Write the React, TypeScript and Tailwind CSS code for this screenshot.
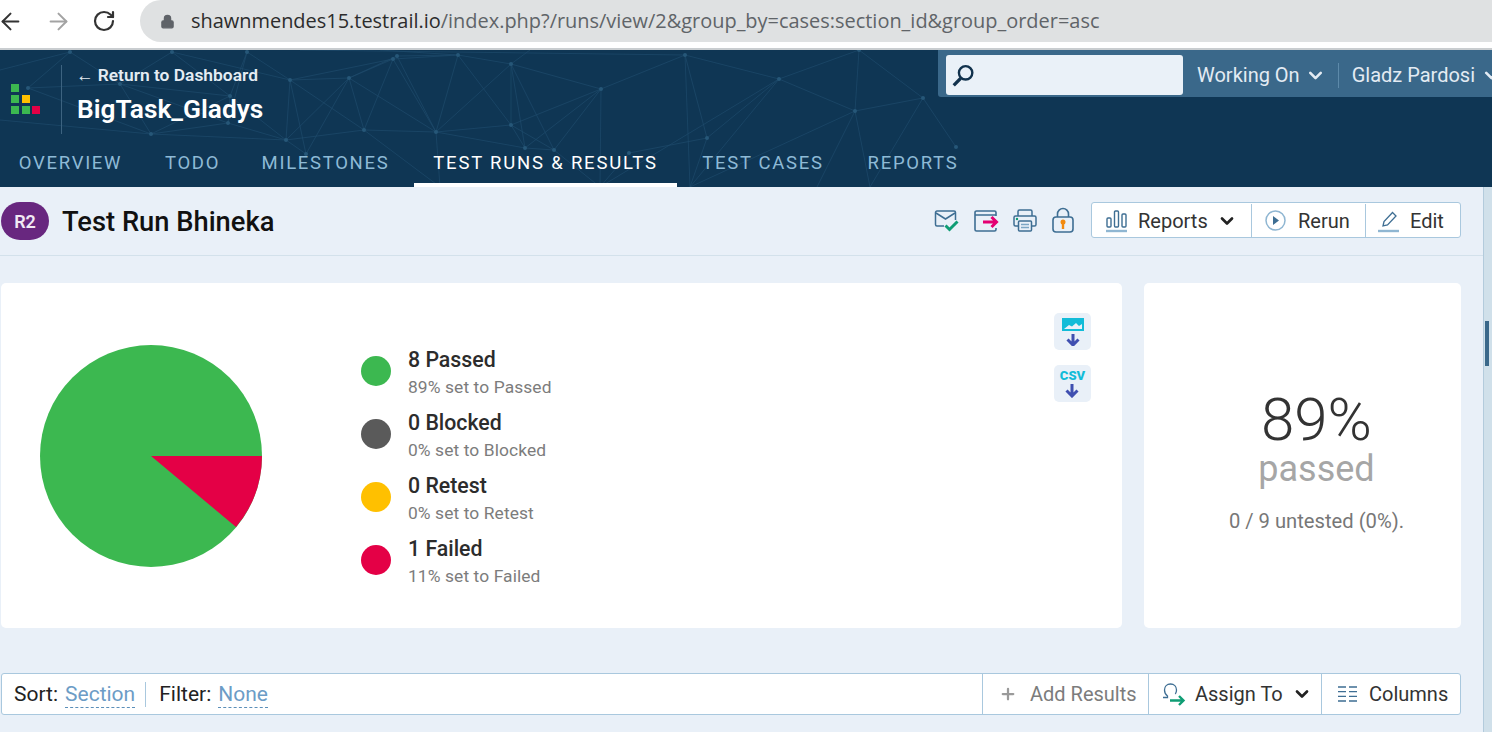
import { ArrowLeft, ArrowRight, ChevronDown, Lock, Plus, RotateCw } from "lucide-react";

const NAV = [
  { label: "Overview", width: "w-[141px]", active: false },
  { label: "Todo", width: "w-[89px]", active: false },
  { label: "Milestones", width: "w-[163px]", active: false },
  { label: "Test Runs & Results", width: "w-[263px]", active: true },
  { label: "Test Cases", width: "w-[158px]", active: false },
  { label: "Reports", width: "w-[128px]", active: false },
];

const STATS = [
  { title: "8 Passed", detail: "89% set to Passed", color: "bg-[#3cb850]" },
  { title: "0 Blocked", detail: "0% set to Blocked", color: "bg-[#5a5a5a]" },
  { title: "0 Retest", detail: "0% set to Retest", color: "bg-[#ffc000]" },
  { title: "1 Failed", detail: "11% set to Failed", color: "bg-[#e40046]" },
];

const NODES: [number, number][] = [
  [70, 52], [172, 52], [247, 52], [28, 88], [120, 84], [230, 96], [228, 123], [151, 134],
  [286, 140], [306, 154], [290, 80], [349, 78], [393, 59], [397, 56], [458, 55], [511, 64],
  [601, 89], [364, 130], [436, 132], [511, 125], [525, 148], [554, 150], [685, 55], [779, 79],
  [855, 111], [923, 98], [707, 138], [629, 153], [956, 147], [859, 50],
];

// points outside the visible band, the lines run off to these
const EDGES: [number, number][] = [
  [0, 70], [300, 50], [440, 187], [600, 187], [690, 187], [817, 187], [870, 187], [380, 50], [530, 50], [0, 120],
];

const POINTS = [...NODES, ...EDGES];

const LINKS: [number, number][] = [
  [0, 3], [0, 4], [0, 30], [1, 4], [1, 5], [1, 10], [2, 5], [2, 6], [2, 10], [3, 4], [3, 7], [4, 7],
  [4, 5], [4, 6], [5, 6], [5, 8], [5, 7], [6, 7], [6, 8], [7, 8], [7, 39], [8, 9], [10, 11], [10, 12],
  [10, 8], [10, 9], [10, 17], [11, 12], [11, 13], [11, 8], [11, 9], [11, 17], [11, 18], [12, 17],
  [12, 18], [13, 18], [13, 14], [12, 14], [14, 18], [14, 15], [14, 19], [15, 18], [15, 19], [15, 20],
  [15, 21], [16, 15], [16, 19], [16, 20], [16, 21], [8, 17], [17, 18], [17, 32], [18, 19], [18, 20],
  [18, 32], [19, 20], [19, 21], [20, 21], [16, 22], [16, 33], [22, 26], [22, 34], [22, 23], [22, 31],
  [23, 29], [23, 24], [23, 26], [23, 33], [23, 34], [24, 25], [24, 35], [24, 36], [25, 29], [25, 28],
  [25, 36], [26, 27], [24, 34], [26, 34], [29, 24], [14, 37], [15, 38], [21, 33], [27, 33],
];

function HeaderNetwork() {
  return (
    <svg className="absolute top-[-50px] left-0 h-[187px] w-[1000px]" viewBox="0 0 1000 187" fill="none">
      {LINKS.map(([a, b]) => (
        <line
          key={`${a}-${b}`}
          x1={POINTS[a][0]}
          y1={POINTS[a][1]}
          x2={POINTS[b][0]}
          y2={POINTS[b][1]}
          stroke="#1e4b6b"
          strokeWidth="0.7"
        />
      ))}
      {NODES.map(([x, y]) => (
        <circle key={`${x}-${y}`} cx={x} cy={y} r="2" fill="#265778" />
      ))}
    </svg>
  );
}

function Logo() {
  return (
    <svg width="30" height="30" viewBox="0 0 30 30">
      <rect x="0" y="0" width="8" height="8" fill="#3cb850" />
      <rect x="0" y="11" width="8" height="8" fill="#3cb850" />
      <rect x="0" y="22" width="8" height="8" fill="#3cb850" />
      <rect x="11" y="11" width="8" height="8" fill="#ffc000" />
      <rect x="11" y="22" width="8" height="8" fill="#3cb850" />
      <rect x="21" y="22" width="8" height="8" fill="#e40046" />
    </svg>
  );
}

function SearchIcon() {
  return (
    <svg width="26" height="26" viewBox="0 0 24 24" fill="none" stroke="#12324d">
      <circle cx="13.5" cy="10" r="6.2" strokeWidth="2.2" />
      <path d="M9 15 L2.5 21.5" strokeWidth="3" />
    </svg>
  );
}

function MailCheck() {
  return (
    <svg width="26" height="26" viewBox="0 0 26 26" fill="none">
      <path d="M10 19H3a1.500 1.500 0 0 1-1.500-1.500v-12A1.500 1.500 0 0 1 3 4h17a1.500 1.500 0 0 1 1.500 1.500V13" stroke="#3e6e93" strokeWidth="1.500" />
      <path d="M2 6l9.500 6L21 6" stroke="#3e6e93" strokeWidth="1.500" />
      <path d="M11.500 18.500l4 4 8-8" stroke="#0f9d74" strokeWidth="3" />
    </svg>
  );
}

function ExportIcon() {
  return (
    <svg width="26" height="26" viewBox="0 0 26 26" fill="none">
      <path d="M23 9V5.500A1.500 1.500 0 0 0 21.500 4h-18A1.500 1.500 0 0 0 2 5.500v17A1.500 1.500 0 0 0 3.500 24h18a1.500 1.500 0 0 0 1.500-1.500V21M2 8h21" stroke="#3e6e93" strokeWidth="1.600" />
      <path d="M10 15h13M18.500 10l5 5-5 5" stroke="#e40072" strokeWidth="3" />
    </svg>
  );
}

function PrintIcon() {
  return (
    <svg width="26" height="26" viewBox="0 0 26 26" fill="none" stroke="#3e6e93" strokeWidth="1.500">
      <path d="M6 9V4.500A1.500 1.500 0 0 1 7.500 3h11A1.500 1.500 0 0 1 20 4.500V9" />
      <path d="M6 19H3.500A1.500 1.500 0 0 1 2 17.500v-7A1.500 1.500 0 0 1 3.500 9h19a1.500 1.500 0 0 1 1.500 1.500v7a1.500 1.500 0 0 1-1.500 1.500H20" />
      <rect x="6.500" y="14" width="13" height="10" rx="1" />
      <path d="M9 17.500h8M9 20.500h8" stroke="#7ba5c4" />
      <circle cx="5" cy="12" r="1.200" fill="#0f9d74" stroke="none" />
    </svg>
  );
}

function LockIcon() {
  return (
    <svg width="24" height="26" viewBox="0 0 24 26" fill="none">
      <rect x="2" y="10" width="20" height="15" rx="3" stroke="#3e6e93" strokeWidth="1.600" />
      <path d="M6.500 10V7a5.500 5.500 0 0 1 11 0v3" stroke="#3e6e93" strokeWidth="1.600" />
      <circle cx="12" cy="15" r="2.500" fill="#f28a0f" />
      <rect x="10.800" y="15" width="2.400" height="7" fill="#f28a0f" />
    </svg>
  );
}

function BarsIcon() {
  return (
    <svg width="21" height="24" viewBox="0 0 21 24" fill="none" stroke="#3e6e93" strokeWidth="1.400">
      <rect x="1" y="9" width="4" height="9" rx="1" />
      <rect x="8.500" y="2" width="4" height="16" rx="1" />
      <rect x="16" y="5" width="4" height="13" rx="1" />
      <path d="M0 22h21" stroke="#8fb6d2" strokeWidth="2.400" />
    </svg>
  );
}

function PlayCircle() {
  return (
    <svg width="21" height="21" viewBox="0 0 21 21" fill="none">
      <circle cx="10.500" cy="10.500" r="9.500" stroke="#8fb6d2" strokeWidth="1.500" />
      <path d="M8 6l6 4.500L8 15z" fill="#3e6e93" />
    </svg>
  );
}

function EditIcon() {
  return (
    <svg width="21" height="24" viewBox="0 0 21 24" fill="none">
      <path d="M5 17l1-4.500L14.500 3.500l3.500 3.500L9.500 16z" stroke="#3e6e93" strokeWidth="1.300" />
      <path d="M0 22h21" stroke="#8fb6d2" strokeWidth="2.400" />
    </svg>
  );
}

function AssignIcon() {
  return (
    <svg width="24" height="24" viewBox="0 0 24 24" fill="none">
      <path d="M1 15.500h4.500v-1.500C3.500 12.500 2.500 10.500 2.500 8 2.500 4.500 5 2 8.500 2s6 2.500 6 6c0 1.500-.4 3-1.200 4" stroke="#3e6e93" strokeWidth="1.300" />
      <path d="M8 18.500h13M17 14l4.500 4.500L17 23" stroke="#0f9d74" strokeWidth="2.400" />
    </svg>
  );
}

function ColumnsIcon() {
  return (
    <svg width="19" height="16" viewBox="0 0 19 16" fill="none" stroke="#3e6e93" strokeWidth="1.300">
      <path d="M0 1h8M0 5.700h8M0 10.300h8M0 15h8M11 1h8M11 5.700h8M11 10.300h8M11 15h8" />
    </svg>
  );
}

function Pie() {
  return (
    <svg width="222" height="222" viewBox="0 0 222 222">
      <circle cx="111" cy="111" r="111" fill="#3cb850" />
      <path d="M111 111 L222 111 A111 111 0 0 1 196 182 Z" fill="#e40046" />
    </svg>
  );
}

function ImageDownload() {
  return (
    <svg width="22" height="28" viewBox="0 0 22 28" fill="none">
      <rect x="0" y="0" width="22" height="13" fill="#12bcd8" />
      <path d="M2 11l5-4 3 1.500L14 5l3 3 3-2v5z" fill="#eaf1f8" />
      <path d="M11 16v10.500M5.500 21.500L11 27l5.500-5.500" stroke="#3f4fb0" strokeWidth="3" />
    </svg>
  );
}

function CsvDownload() {
  return (
    <div className="flex flex-col items-center">
      <span className="text-[13px] leading-[12px] font-black text-[#12bcd8]">CSV</span>
      <svg width="14" height="14" viewBox="0 0 14 14" fill="none" className="mt-[2px]">
        <path d="M7 0v12M1.500 6.500L7 12l5.500-5.500" stroke="#3f4fb0" strokeWidth="3" />
      </svg>
    </div>
  );
}

export default function App() {
  return (
    <div className="flex h-[732px] w-[1492px] flex-col overflow-hidden bg-[#e9f0f8] font-['Roboto',sans-serif]">
      {/* browser chrome */}
      <div className="flex h-[50px] shrink-0 border-b-2 border-[#c9cdd0] bg-white pb-[6px]">
        <div className="flex w-[140px] shrink-0 items-center">
          <ArrowLeft size={27} strokeWidth={1.8} className="-ml-[3px]" color="#333" />
          <ArrowRight size={27} strokeWidth={1.8} className="ml-[21px]" color="#a3a3a3" />
          <RotateCw size={24} strokeWidth={2.2} className="ml-[20px]" color="#333" />
        </div>
        <div className="flex grow items-center rounded-l-[21px] bg-[#dfe1e2] pl-[20px]">
          <Lock size={15} className="fill-[#5f6368] text-[#5f6368]" />
          <div className="ml-[16px] font-['Open_Sans',sans-serif] text-[19.95px] whitespace-nowrap text-[#606468]">
            <span className="text-[#2c2c2c]">shawnmendes15.testrail.io</span>/index.php?/runs/view/2&group_by=cases:section_id&group_order=asc
          </div>
        </div>
      </div>

      {/* app header */}
      <header className="relative h-[137px] shrink-0 overflow-hidden bg-[#0f3654]">
        <HeaderNetwork />
        <div className="relative flex h-[137px] flex-col justify-between">
          <div className="flex items-start justify-between">
            <div className="flex pt-[15px]">
              <div className="flex h-[69px] w-[62px] shrink-0 items-end border-r border-[#3d6380] pb-[20px] pl-[11px]">
                <Logo />
              </div>
              <div className="pl-[15px]">
                <div className="-ml-[1px] text-[17.4px] leading-[20px] font-semibold whitespace-nowrap text-[#e4ecf3]">← Return to Dashboard</div>
                <div className="mt-[9px] text-[26.3px] leading-[30px] font-semibold whitespace-nowrap text-white">BigTask_Gladys</div>
              </div>
            </div>
            <div className="flex h-[47px] w-[554px] items-center overflow-hidden rounded-bl-[3px] bg-[#3a688a] pt-[3px] pl-[8px]">
              <div className="flex h-[40px] w-[237px] shrink-0 items-center rounded-[3px] bg-[#eaf1f8] pl-[5px]">
                <SearchIcon />
              </div>
              <div className="ml-[14px] flex shrink-0 items-center text-[20px] whitespace-nowrap text-[#e3ebf3]">
                Working On
                <ChevronDown size={21} strokeWidth={3} className="ml-[5px]" />
              </div>
              <div className="ml-[12px] h-[25px] w-px shrink-0 bg-[#5d8aaa]" />
              <div className="ml-[13px] flex shrink-0 items-center text-[20px] whitespace-nowrap text-[#e3ebf3]">
                Gladz Pardosi
                <ChevronDown size={21} strokeWidth={3} className="ml-[6px]" />
              </div>
            </div>
          </div>
          <nav className="flex gap-[7px]">
            {NAV.map((item) => (
              <div
                key={item.label}
                className={
                  item.active
                    ? `${item.width} border-b-4 border-white pb-[8px] text-center text-[18.5px] leading-[24px] tracking-[1.8px] whitespace-nowrap text-white uppercase`
                    : `${item.width} border-b-4 border-transparent pb-[8px] text-center text-[18.5px] leading-[24px] tracking-[1.7px] whitespace-nowrap text-[#8ebad6] uppercase`
                }
              >
                {item.label}
              </div>
            ))}
          </nav>
        </div>
      </header>

      <div className="flex min-h-0 grow">
        <main className="w-[1483px] shrink-0">
          {/* title row */}
          <div className="flex h-[69px] items-center justify-between border-b border-[#d3e1eb] pr-[22px] pl-[1px]">
            <div className="flex items-center">
              <div className="flex h-[38px] w-[48px] items-center justify-center rounded-[19px] bg-[#68277f] text-[18px] font-semibold text-[#f1e9f4]">R2</div>
              <h1 className="mt-[1px] ml-[13px] text-[27.3px] leading-[34px] font-medium text-[#111]">Test Run Bhineka</h1>
            </div>
            <div className="-mt-[2px] flex items-center">
              <div className="flex items-center gap-[13px]">
                <MailCheck />
                <ExportIcon />
                <PrintIcon />
                <LockIcon />
              </div>
              <div className="ml-[16px] flex h-[36px] items-center rounded-[3px] border border-[#a9c8de] bg-white pt-[1px] text-[20px] text-[#333]">
                <div className="flex h-full w-[160px] items-center border-r border-[#a9c8de] pl-[14px]">
                  <BarsIcon />
                  <span className="ml-[11px]">Reports</span>
                  <ChevronDown size={20} strokeWidth={3.2} className="ml-[9px] text-[#222]" />
                </div>
                <div className="flex h-full w-[114px] items-center border-r border-[#a9c8de] pl-[13px]">
                  <PlayCircle />
                  <span className="ml-[12px]">Rerun</span>
                </div>
                <div className="flex h-full w-[94px] items-center pl-[12px]">
                  <EditIcon />
                  <span className="ml-[11px]">Edit</span>
                </div>
              </div>
            </div>
          </div>

          {/* summary cards */}
          <div className="mt-[27px] flex gap-[22px] pl-[1px]">
            <section className="relative flex h-[345px] w-[1121px] items-center rounded-[5px] bg-white pl-[39px]">
              <Pie />
              <div className="ml-[99px] flex flex-col gap-[13px] pt-[20px]">
                {STATS.map((stat) => (
                  <div key={stat.title} className="flex h-[50px] items-center">
                    <div className={`h-[30px] w-[30px] rounded-full ${stat.color}`} />
                    <div className="ml-[17px] pt-[1px]">
                      <div className="text-[21.3px] leading-[26px] font-medium whitespace-nowrap text-[#2c2c2c]">{stat.title}</div>
                      <div className="mt-[4px] text-[17.4px] leading-[20px] tracking-[0.1px] whitespace-nowrap text-[#7c7c7c]">{stat.detail}</div>
                    </div>
                  </div>
                ))}
              </div>
              <div className="absolute top-[30px] right-[31px] flex flex-col gap-[15px]">
                <div className="flex h-[37px] w-[37px] items-center justify-center rounded-[5px] bg-[#e9f0f8]">
                  <ImageDownload />
                </div>
                <div className="flex h-[37px] w-[37px] items-center justify-center rounded-[5px] bg-[#e9f0f8]">
                  <CsvDownload />
                </div>
              </div>
            </section>
            <section className="flex h-[345px] w-[317px] flex-col items-center rounded-[5px] bg-white pt-[106px] pl-[28px]">
              <div className="text-[60px] leading-[62px] font-light text-[#333]">89%</div>
              <div className="text-[36px] leading-[36px] text-[#a6a6a6]">passed</div>
              <div className="mt-[22px] text-[20.2px] leading-[24px] whitespace-nowrap text-[#777]">0 / 9 untested (0%).</div>
            </section>
          </div>

          {/* toolbar */}
          <div className="mt-[45px] ml-[1px] flex h-[42px] w-[1460px] items-center rounded-[3px] border border-[#a9c8de] bg-white text-[20px]">
            <div className="flex w-[980px] shrink-0 items-center pt-[1px] pl-[12px] text-[21px]">
              <span className="text-[#222]">Sort:</span>
              <span className="ml-[7px] border-b border-dashed border-[#5b8fb9] leading-[25px] text-[#6c9cc6]">Section</span>
              <div className="ml-[10px] h-[25px] w-px bg-[#a9c8de]" />
              <span className="ml-[13px] text-[#222]">Filter:</span>
              <span className="ml-[7px] border-b border-dashed border-[#5b8fb9] leading-[25px] text-[#6c9cc6]">None</span>
            </div>
            <div className="flex h-full w-[166px] shrink-0 items-center border-l border-[#a9c8de] pl-[16px] text-[#7c7c7c]">
              <Plus size={18} strokeWidth={3} className="text-[#9a9a9a]" />
              <span className="ml-[13px] whitespace-nowrap">Add Results</span>
            </div>
            <div className="flex h-full w-[173px] shrink-0 items-center border-l border-[#a9c8de] pl-[13px] text-[#333]">
              <AssignIcon />
              <span className="ml-[9px] whitespace-nowrap">Assign To</span>
              <ChevronDown size={20} strokeWidth={3.2} className="ml-[9px] text-[#222]" />
            </div>
            <div className="flex h-full grow items-center border-l border-[#a9c8de] pl-[16px] text-[#333]">
              <ColumnsIcon />
              <span className="ml-[12px]">Columns</span>
            </div>
          </div>
        </main>

        {/* page scrollbar */}
        <div className="w-[9px] shrink-0 border-l border-[#b3cbdc] bg-[#d0e0ea] pt-[134px] pl-[1px]">
          <div className="h-[45px] w-[4px] bg-[#3a688a]" />
        </div>
      </div>
    </div>
  );
}
